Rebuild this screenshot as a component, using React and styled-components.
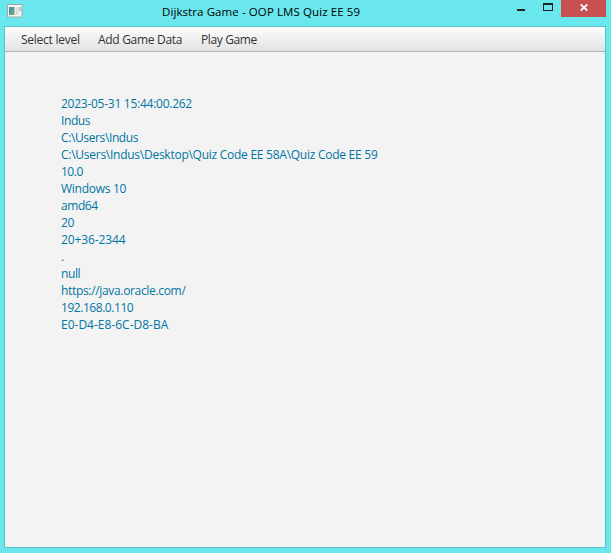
import React from "react";
import styled, { createGlobalStyle } from "styled-components";

const GlobalStyle = createGlobalStyle`
  * { box-sizing: border-box; }
  body { margin: 0; background: #6ae7ed; overflow: hidden; }
`;

const Window = styled.div`
  width: 611px;
  height: 553px;
  display: flex;
  flex-direction: column;
  padding: 0 5px 5px 4px;
  background: #6ae7ed;
  font-family: "Open Sans", "Noto Sans", sans-serif;
  font-size: 12px;
`;

const TitleBar = styled.header`
  height: 26px;
  flex: none;
  display: grid;
  grid-template-columns: 158px 1fr auto;
  align-items: start;
`;

const AppIcon = styled.svg`
  width: 16px;
  height: 14px;
  margin: 4px 0 0 3px;
`;

const Title = styled.h1`
  margin: 0;
  font-size: 11.5px;
  font-weight: 400;
  line-height: 24px;
  letter-spacing: 0.09px;
  white-space: nowrap;
  color: #000;
`;

const Controls = styled.div`
  display: flex;
`;

const ControlButton = styled.button`
  width: ${(p) => p.$width}px;
  height: 17px;
  padding: 0;
  border: 0;
  display: block;
  background: ${(p) => (p.$danger ? "#c75050" : "transparent")};
  svg { display: block; }
`;

const Frame = styled.main`
  flex: 1;
  display: flex;
  flex-direction: column;
  border: 1px solid #59c2c8;
  background: #f3f3f3;
`;

const MenuBar = styled.nav`
  height: 25px;
  flex: none;
  display: flex;
  padding-left: 16px;
  border-bottom: 1px solid #b3b3b3;
  background: linear-gradient(#fdfdfd, #e2e2e2);
`;

const MenuItem = styled.span`
  width: ${(p) => p.$width}px;
  line-height: 26px;
  letter-spacing: ${(p) => p.$spacing}px;
  white-space: nowrap;
  color: #333;
`;

const Output = styled.section`
  padding: 43px 0 0 56px;
`;

const Line = styled.div`
  height: 17px;
  line-height: 17px;
  letter-spacing: ${(p) => p.$spacing}px;
  white-space: pre;
  color: #0076a3;
`;

const menus = [
  { label: "Select level", width: 77, spacing: -0.25 },
  { label: "Add Game Data", width: 103, spacing: -0.3 },
  { label: "Play Game", width: 80, spacing: -0.38 },
];

const lines = [
  ["2023-05-31 15:44:00.262", -0.26],
  ["Indus", -0.4],
  ["C:\\Users\\Indus", -0.38],
  ["C:\\Users\\Indus\\Desktop\\Quiz Code EE 58A\\Quiz Code EE 59", -0.26],
  ["10.0", -0.5],
  ["Windows 10", -0.27],
  ["amd64", -0.45],
  ["20", -0.3],
  ["20+36-2344", -0.1],
  [".", 0],
  ["null", -0.4],
  ["https://java.oracle.com/", -0.33],
  ["192.168.0.110", -0.45],
  ["E0-D4-E8-6C-D8-BA", 0],
];

export default function App() {
  return (
    <Window>
      <GlobalStyle />
      <TitleBar>
        <AppIcon viewBox="0 0 16 14">
          <defs>
            <linearGradient id="pane" x1="0" y1="0" x2="1" y2="1">
              <stop offset="0" stopColor="#4d80ad" />
              <stop offset="1" stopColor="#6eb37e" />
            </linearGradient>
          </defs>
          <rect x=".5" y=".5" width="14.5" height="12.5" fill="#f6f4f5" stroke="#a3a9ae" />
          <rect x="2" y="3" width="5.5" height="8" fill="url(#pane)" />
          <rect x="8.5" y="3" width="3" height="8" fill="#dcdcdf" />
          <rect x="12" y="3" width="2" height="4" fill="#a9cfb9" />
        </AppIcon>
        <Title>Dijkstra Game - OOP LMS Quiz EE 59</Title>
        <Controls>
          <ControlButton $width={27} aria-label="Minimize">
            <svg width="27" height="17"><path d="M10 9h8v2h-8z" fill="#222" /></svg>
          </ControlButton>
          <ControlButton $width={27} aria-label="Maximize">
            <svg width="27" height="17"><path d="M9 3h10v8H9zM10 5v5h8V5z" fill="#222" fillRule="evenodd" /></svg>
          </ControlButton>
          <ControlButton $width={45} $danger aria-label="Close">
            <svg width="45" height="17"><path d="M19.7 4.3l6.6 6.4M26.3 4.3l-6.6 6.4" stroke="#fff" strokeWidth="1.8" /></svg>
          </ControlButton>
        </Controls>
      </TitleBar>
      <Frame>
        <MenuBar>
          {menus.map((m) => (
            <MenuItem key={m.label} $width={m.width} $spacing={m.spacing}>{m.label}</MenuItem>
          ))}
        </MenuBar>
        <Output>
          {lines.map(([text, spacing]) => (
            <Line key={text} $spacing={spacing}>{text}</Line>
          ))}
        </Output>
      </Frame>
    </Window>
  );
}
